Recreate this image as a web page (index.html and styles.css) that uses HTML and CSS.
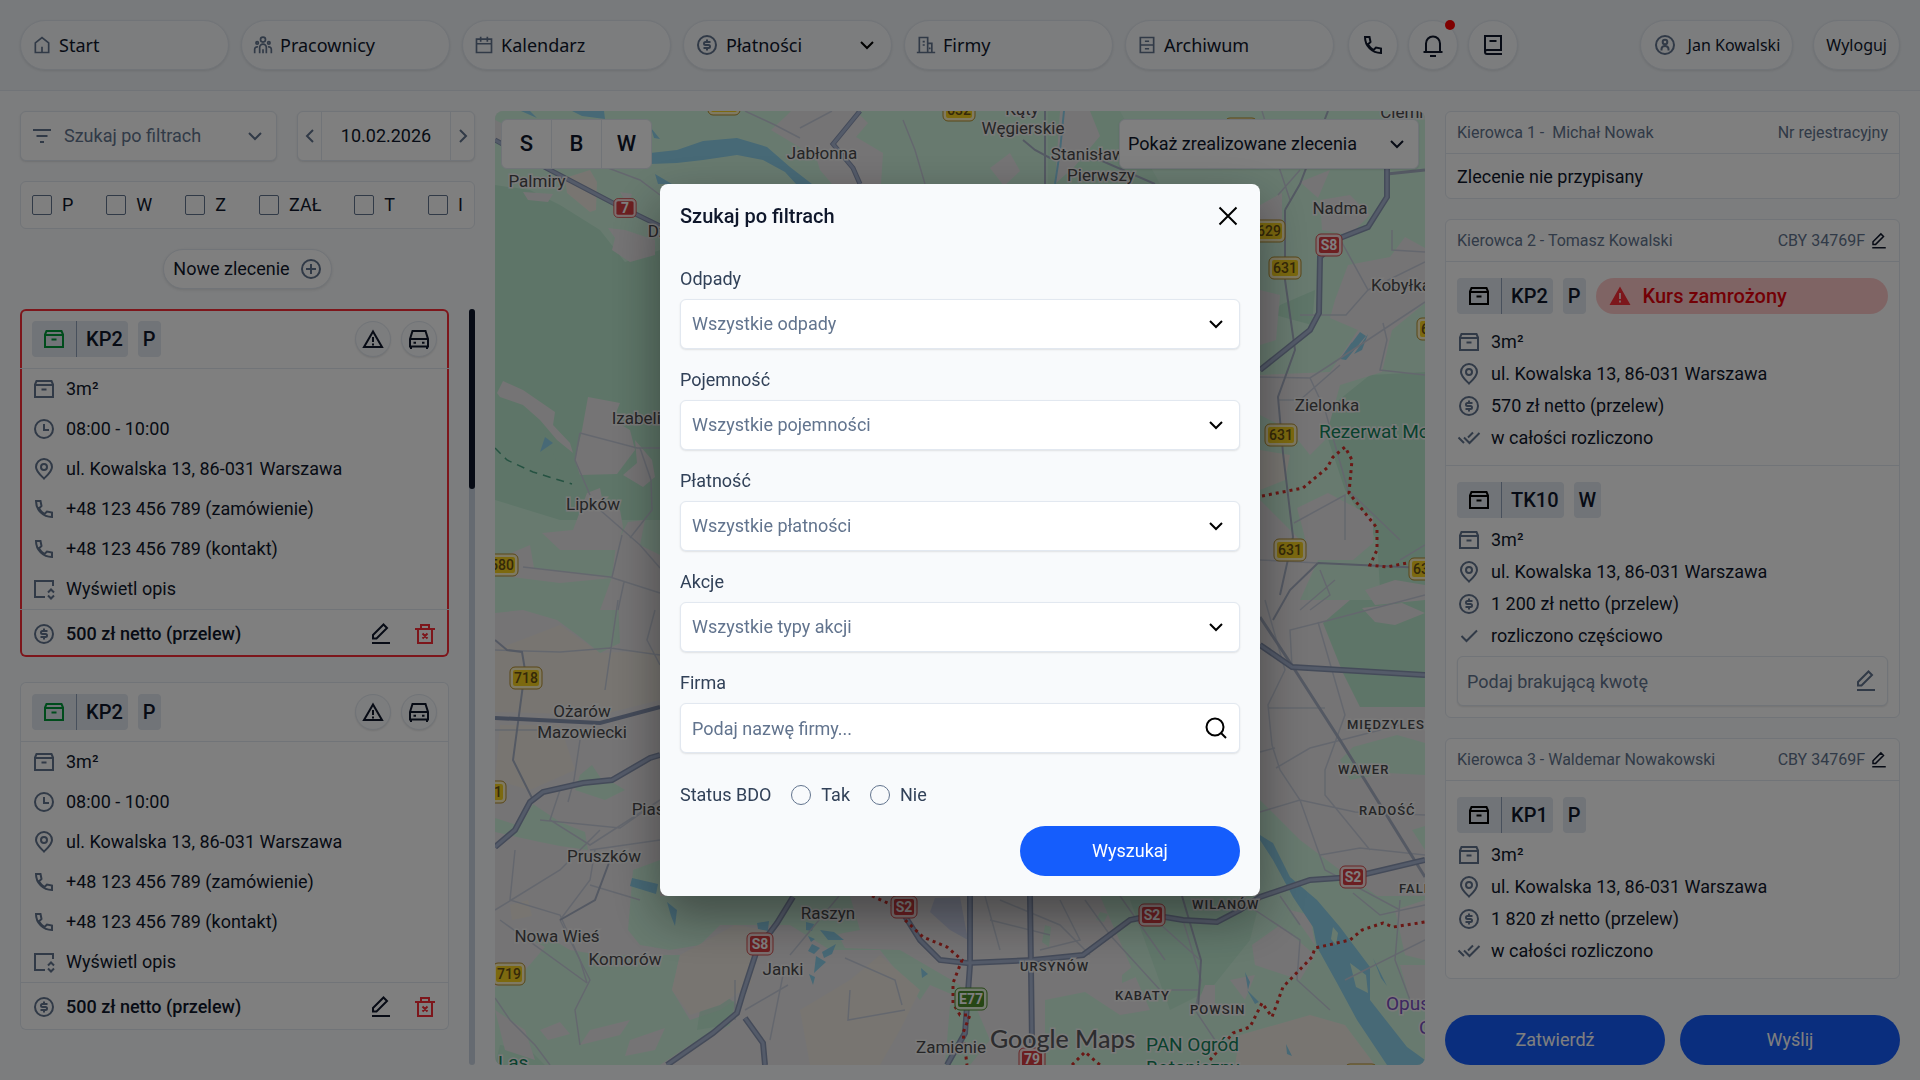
FILE: index.html
```html
<!doctype html>
<html lang="pl">
<head>
    <meta charset="UTF-8">
    <meta name="viewport" content="width=device-width, initial-scale=1.0">
    <title>Zlecenia</title>
    <link rel="stylesheet" href="styles.css">
</head>
<body>
    <!-- icons -->
    <svg class="sprite" aria-hidden="true">
        <symbol id="home" viewBox="0 0 24 24"><path d="M4 21V9.500L12 3l8 6.500V21zM12 21v-7"/></symbol>
        <symbol id="people" viewBox="0 0 24 24"><circle cx="12" cy="5.500" r="3"/><circle cx="5" cy="9.500" r="1.500"/><circle cx="19" cy="9.500" r="1.500"/><path d="M8 22v-7a4 4 0 0 1 8 0v7M12 17v5M2 22v-5a3 3 0 0 1 4-2.500M22 22v-5a3 3 0 0 0-4-2.500"/></symbol>
        <symbol id="calendar" viewBox="0 0 24 24"><path d="M3 5h18v16H3zM3 10.500h18M8 2v6M16 2v6"/></symbol>
        <symbol id="dollar" viewBox="0 0 24 24"><circle cx="12" cy="12" r="9"/><path d="M15.500 9h-5a1.500 1.500 0 0 0 0 3h3a1.500 1.500 0 0 1 0 3h-5M12 6.500V9M12 15v2.500"/></symbol>
        <symbol id="building" viewBox="0 0 24 24"><path d="M1 21h22M4 21V3h10v18M14 10h5v11M8 8h2.500M8 12h2.500M16.500 15v2"/></symbol>
        <symbol id="cabinet" viewBox="0 0 24 24"><path d="M4 3h16v18H4zM4 12h16M9.500 7.500h5M9.500 16.500h5"/></symbol>
        <symbol id="phone" viewBox="0 0 24 24"><path d="M4 4h4.500l1 5L7 11.500c1.500 2.500 3 4 5.500 5.500l2.500-2.500 5 1V20C11 20 4 13 4 4z"/></symbol>
        <symbol id="bell" viewBox="0 0 24 24"><path d="M2.500 19h19M5 19v-8.500a7 7 0 0 1 14 0V19M9 23h6"/></symbol>
        <symbol id="book" viewBox="0 0 24 24"><path d="M21 21H6a2 2 0 0 1-2-2V3h16v14H6a2 2 0 0 0-2 2M8.500 8h7"/></symbol>
        <symbol id="user" viewBox="0 0 24 24"><circle cx="12" cy="12" r="9"/><circle cx="12" cy="9" r="2.300"/><path d="M8.500 17.500v-1.500a3.500 3 0 0 1 7 0v1.500"/></symbol>
        <symbol id="filter" viewBox="0 0 24 24"><path d="M3 6h18M6.500 12h11M10 18h4"/></symbol>
        <symbol id="down" viewBox="0 0 24 24"><path d="M6 9l6 6 6-6"/></symbol>
        <symbol id="left" viewBox="0 0 24 24"><path d="M15 6l-6 6 6 6"/></symbol>
        <symbol id="right" viewBox="0 0 24 24"><path d="M9 6l6 6-6 6"/></symbol>
        <symbol id="plus" viewBox="0 0 24 24"><circle cx="12" cy="12" r="9"/><path d="M12 7v10M7 12h10"/></symbol>
        <symbol id="box" viewBox="0 0 24 24"><path d="M3 7.500V20h18V7.500L19.500 4h-15zM3 8h18M9.500 12.500h5"/></symbol>
        <symbol id="clock" viewBox="0 0 24 24"><circle cx="12" cy="12" r="9"/><path d="M12 7v6h5"/></symbol>
        <symbol id="pin" viewBox="0 0 24 24"><path d="M12 21.500c-3-3-8-7-8-11.500a8 8 0 0 1 16 0c0 4.500-5 8.500-8 11.500z"/><circle cx="12" cy="10" r="3"/></symbol>
        <symbol id="note" viewBox="0 0 24 24"><path d="M21 9V4H3v16h10M16 15.500l3-3 3 3M16 18.500l3 3 3-3"/></symbol>
        <symbol id="edit" viewBox="0 0 24 24"><path d="M3 21h18M4 16.500V13L14.500 2.500 18 6 7.500 16.500z"/></symbol>
        <symbol id="trash" viewBox="0 0 24 24"><path d="M2 7h20M8 6.500V3h8v3.500M5 7v14h14V7M9.500 11.500l5 5M14.500 11.500l-5 5"/></symbol>
        <symbol id="warn" viewBox="0 0 24 24"><path d="M12 4.500L3 20h18zM12 10v5M12 16.500v2"/></symbol>
        <symbol id="warn-full" viewBox="0 0 24 24"><path fill="currentColor" stroke="none" fill-rule="evenodd" d="M12 2.500L1.500 21h21zM11 9h2v6h-2zM11 16.500h2v2h-2z"/></symbol>
        <symbol id="car" viewBox="0 0 24 24"><path d="M3 12l2.500-8h13L21 12v7.500H3zM3 12h18M4 19v3M20 19v3M6.500 15.700h2.500M15 15.700h2.500"/></symbol>
        <symbol id="check" viewBox="0 0 24 24"><path d="M4.500 12l5 5L20 6.500"/></symbol>
        <symbol id="checks" viewBox="0 0 24 24"><path d="M1.500 11.500l5.500 5.500M7 11.500l5.500 5.500L22.500 7M11 11.500L16 6.500"/></symbol>
        <symbol id="close" viewBox="0 0 24 24"><path d="M3.500 3.500l17 17M20.500 3.500l-17 17"/></symbol>
        <symbol id="search" viewBox="0 0 24 24"><circle cx="11" cy="11" r="8.500"/><path d="M17 17l5 5"/></symbol>
        <symbol id="s-yellow" viewBox="0 0 34 24"><rect x="1" y="1" width="32" height="22" rx="5" fill="#fff4c4" stroke="#b58f2c"/><rect x="4" y="4" width="26" height="16" rx="2" fill="#f9d31f" stroke="none"/></symbol>
        <symbol id="s-red" viewBox="0 0 28 24"><rect x="1" y="1" width="26" height="22" rx="5" fill="#f9dede" stroke="#d34b4b"/><rect x="4" y="4" width="20" height="16" rx="2" fill="#d93f43" stroke="none"/></symbol>
        <symbol id="s-green" viewBox="0 0 34 24"><rect x="1" y="1" width="32" height="22" rx="5" fill="#e7f5de" stroke="#4c8c2b"/><rect x="4" y="4" width="26" height="16" rx="2" fill="#4c8c2b" stroke="none"/></symbol>
    </svg>

    <header class="topbar">
        <nav class="nav">
            <a class="pill" href="#"><svg class="icon icon-s"><use href="#home"/></svg>Start</a>
            <a class="pill" href="#"><svg class="icon icon-s"><use href="#people"/></svg>Pracownicy</a>
            <a class="pill" href="#"><svg class="icon icon-s"><use href="#calendar"/></svg>Kalendarz</a>
            <button class="pill" type="button"><svg class="icon"><use href="#dollar"/></svg>Płatności<svg class="icon pill-arrow"><use href="#down"/></svg></button>
            <a class="pill" href="#"><svg class="icon icon-s"><use href="#building"/></svg>Firmy</a>
            <a class="pill" href="#"><svg class="icon icon-s"><use href="#cabinet"/></svg>Archiwum</a>
        </nav>
        <div class="tools">
            <button class="round" type="button" aria-label="Telefon"><svg class="icon"><use href="#phone"/></svg></button>
            <button class="round" type="button" aria-label="Powiadomienia"><svg class="icon"><use href="#bell"/></svg><span class="dot"></span></button>
            <button class="round" type="button" aria-label="Notatnik"><svg class="icon"><use href="#book"/></svg></button>
        </div>
        <div class="account">
            <a class="pill pill-small" href="#"><svg class="icon"><use href="#user"/></svg>Jan Kowalski</a>
            <button class="pill pill-small" type="button">Wyloguj</button>
        </div>
    </header>

    <main class="main">
        <!-- orders -->
        <aside class="orders">
            <div class="orders-top">
                <button class="filter" type="button"><svg class="icon"><use href="#filter"/></svg>Szukaj po filtrach<svg class="icon filter-arrow"><use href="#down"/></svg></button>
                <div class="date">
                    <button type="button" aria-label="Poprzedni dzień"><svg class="icon"><use href="#left"/></svg></button>
                    <span>10.02.2026</span>
                    <button type="button" aria-label="Następny dzień"><svg class="icon"><use href="#right"/></svg></button>
                </div>
            </div>
            <div class="checks">
                <label><input type="checkbox">P</label>
                <label><input type="checkbox">W</label>
                <label><input type="checkbox">Z</label>
                <label><input type="checkbox">ZAŁ</label>
                <label><input type="checkbox">T</label>
                <label><input type="checkbox">I</label>
            </div>
            <button class="new-order" type="button">Nowe zlecenie<svg class="icon"><use href="#plus"/></svg></button>

            <div class="list-wrap">
                <div class="list">
                    <article class="order order-active">
                        <div class="order-head">
                            <span class="tag tag-green"><span class="tag-icon"><svg class="icon"><use href="#box"/></svg></span><b>KP2</b></span>
                            <span class="tag"><b>P</b></span>
                            <button class="mini first" type="button" aria-label="Ostrzeżenie"><svg class="icon"><use href="#warn"/></svg></button>
                            <button class="mini" type="button" aria-label="Pojazd"><svg class="icon"><use href="#car"/></svg></button>
                        </div>
                        <ul class="rows">
                            <li><svg class="icon"><use href="#box"/></svg>3m²</li>
                            <li><svg class="icon"><use href="#clock"/></svg>08:00 - 10:00</li>
                            <li><svg class="icon"><use href="#pin"/></svg>ul. Kowalska 13, 86-031 Warszawa</li>
                            <li><svg class="icon"><use href="#phone"/></svg>+48 123 456 789 (zamówienie)</li>
                            <li><svg class="icon"><use href="#phone"/></svg>+48 123 456 789 (kontakt)</li>
                            <li><svg class="icon"><use href="#note"/></svg>Wyświetl opis</li>
                        </ul>
                        <div class="order-foot">
                            <svg class="icon"><use href="#dollar"/></svg>500 zł netto (przelew)
                            <button class="plain first" type="button" aria-label="Edytuj"><svg class="icon"><use href="#edit"/></svg></button>
                            <button class="plain red" type="button" aria-label="Usuń"><svg class="icon"><use href="#trash"/></svg></button>
                        </div>
                    </article>
                    <article class="order">
                        <div class="order-head">
                            <span class="tag tag-green"><span class="tag-icon"><svg class="icon"><use href="#box"/></svg></span><b>KP2</b></span>
                            <span class="tag"><b>P</b></span>
                            <button class="mini first" type="button" aria-label="Ostrzeżenie"><svg class="icon"><use href="#warn"/></svg></button>
                            <button class="mini" type="button" aria-label="Pojazd"><svg class="icon"><use href="#car"/></svg></button>
                        </div>
                        <ul class="rows">
                            <li><svg class="icon"><use href="#box"/></svg>3m²</li>
                            <li><svg class="icon"><use href="#clock"/></svg>08:00 - 10:00</li>
                            <li><svg class="icon"><use href="#pin"/></svg>ul. Kowalska 13, 86-031 Warszawa</li>
                            <li><svg class="icon"><use href="#phone"/></svg>+48 123 456 789 (zamówienie)</li>
                            <li><svg class="icon"><use href="#phone"/></svg>+48 123 456 789 (kontakt)</li>
                            <li><svg class="icon"><use href="#note"/></svg>Wyświetl opis</li>
                        </ul>
                        <div class="order-foot">
                            <svg class="icon"><use href="#dollar"/></svg>500 zł netto (przelew)
                            <button class="plain first" type="button" aria-label="Edytuj"><svg class="icon"><use href="#edit"/></svg></button>
                            <button class="plain red" type="button" aria-label="Usuń"><svg class="icon"><use href="#trash"/></svg></button>
                        </div>
                    </article>
                </div>
                <div class="scroll"><div class="thumb"></div></div>
            </div>
        </aside>

        <!-- map -->
        <section class="map">
            <svg class="map-svg" viewBox="495 111 930 954" preserveAspectRatio="xMidYMid slice">
                <rect x="495" y="111" width="930" height="954" fill="#ebe8ea"/>
                <!-- green -->
                <g fill="#d0f5df">
                    <path d="M495 111H1425V600H495z"/>
                    <path d="M495 600H618L620 643 600 653 580 637 557 620 523 610 495 613z"/>
                    <path d="M495 818L520 826 533 804 560 822 585 832 588 850 560 846 540 842 495 832z"/>
                    <path d="M580 775L592 765 602 780 612 782 625 790 605 800 575 790z"/>
                    <path d="M633 870L660 860 660 896H850L860 930 838 934 845 948 900 950 960 985 965 1000 930 985 920 1000 880 950 830 950 790 925 765 925 740 925 720 925 700 945 670 950 640 945 628 930z"/>
                    <path d="M495 970L520 950 545 935 570 950 600 955 680 955 672 990 690 1020 720 1010 735 1000 730 1025 690 1045 660 1065H495z"/>
                    <path d="M1100 896H1425V1065H1045V1000L1085 992 1120 1015 1150 1010z"/>
                    <path d="M1260 800L1300 840 1340 870 1390 905 1340 920 1290 905 1260 900z"/>
                    <path d="M1340 760L1353 747 1397 735 1425 743V775L1387 773 1350 780z"/>
                    <path d="M1412 830L1425 826V850z"/>
                    <path d="M950 1005H975L990 1040 970 1065H945z"/>
                    <path d="M1045 925l6 2-2 20-7-5zM1122 975l10-8 4 10-14 6zM1100 912l8 2-4 8-8-2z"/>
                </g>
                <g fill="#bcebd0">
                    <path d="M495 185L530 190 560 205 600 230 625 262 660 250V520H560L495 500z"/>
                    <path d="M540 420L575 400 590 390 625 400 660 420V500H600L560 470z" opacity=".6"/>
                    <path d="M1130 900H1260L1250 940 1210 990 1170 1010z" opacity=".7"/>
                    <path d="M1048 111L1120 111 1160 184H1048z" opacity=".5"/>
                    <path d="M1320 415L1370 375 1425 372V610L1380 590 1377 540 1345 490z"/>
                    <path d="M1323 623L1350 600H1425V707H1360L1343 673z"/>
                    <path d="M1280 305L1315 290 1312 325 1275 315z"/>
                    <path d="M700 1010l25-15 12 10-10 20-30 5zM500 1045l30 5 15 15H495z" opacity=".7"/>
                </g>
                <!-- built-up land -->
                <g fill="#ebe8ea">
                    <path d="M791 111H856L868 123 856 137 883 153 881 184H832L820 170 816 157 771 130 785 117z"/>
                    <path d="M990 168l20-15 10 18-16 15zM1060 111h30l10 25-25 30-20 18z"/>
                    <path d="M497 393L503 381 523 390 555 412 553 425 570 443 573 453 557 440 540 420 523 405 500 397z"/>
                    <path d="M588 397L620 403 613 420 630 430 635 450 617 474 580 475 575 460 582 430z"/>
                    <path d="M623 475L637 463 635 440 652 460 655 477 643 487z"/>
                    <path d="M542 533L573 530 587 493 600 488 603 503 620 510 623 527 617 550H560z"/>
                    <path d="M628 522L645 520 640 545 660 555V610H600L612 577 616 545z"/>
                    <path d="M495 560L530 545 534 568 612 578 560 583 495 575z"/>
                    <path d="M608 228L625 230 655 240V255L630 262 612 250 615 238z"/>
                    <path d="M523 192l30 2-5 8-20-2zM620 192l12 2-4 12zM495 120l25 12-5 18-20-10z"/>
                    <path d="M1348 265L1390 257 1405 237 1425 248V303L1392 330 1382 372 1340 385 1325 440 1310 455 1290 430 1260 415V375L1330 372 1358 330 1330 318 1335 300z"/>
                    <path d="M1297 508L1328 493 1373 517V543L1353 560H1310L1303 530z"/>
                    <path d="M1300 182l30-12-12 28zM1260 205l22-12v30l-22 8zM1260 290l20 5-4 45-16 5zM1320 200l30-5 20 20-20 20-28-5z"/>
                    <path d="M1260 500L1300 540 1318 560 1300 600H1260z"/>
                    <path d="M1365 590l30-10 30 5v15l-50 5zM1362 608l40-5 23 10-30 12-20-3z"/>
                    <path d="M1252 945l28-20 35 30-15 25-45-15zM1290 910l20 5 5 30zM1205 985l10 0 0 25-20 0zM1230 980l25-5-10 25zM1395 910l30-10v60l-20-5zM1400 965h25v45l-15-10z"/>
                    <path d="M495 955l30-18 20 10-30 35-20 5zM540 1030l20-8 10 12-22 6zM590 1030l40-10-10 15-40 10zM630 1040l35-12-10 22-30 6zM495 1010l30 20 10 30-30-10z"/>
                </g>
                <!-- beige -->
                <g fill="#f0ebe3">
                    <path d="M565 178L590 170 597 182 596 210 590 212 567 193z"/>
                    <path d="M495 650L560 625 600 653 660 650V700L600 715 495 712zM500 725L560 725 575 770 530 790 495 780z"/>
                    <path d="M680 955L735 925 765 930 750 985 720 1005 690 1015 672 990z"/>
                    <path d="M850 980L880 955 920 990 900 1030 880 1065H810L800 1010z"/>
                    <path d="M1240 1035L1310 1015 1345 1025 1375 1065H1235z"/>
                    <path d="M1260 450L1290 455 1285 480 1260 490zM510 905l18-5 4 16-20 4z"/>
                </g>
                <path d="M935 898L960 897 968 940 950 930 930 912z" fill="#cdd3ea"/>
                <!-- water -->
                <g fill="#8fd2ec">
                    <path d="M650 153L677 150 703 141 737 138 767 147 790 167 812 184H796L785 172 763 160 737 155 703 160 677 163 650 164z"/>
                    <path d="M572 111H604L605 119 582 116zM521 111H530L537 118zM651 128L660 139 654 138zM655 174L672 184H658z"/>
                    <path d="M545 437L553 443 540 452z"/>
                    <path d="M1260 835L1273 843 1290 877 1317 900 1340 927 1370 967V1000L1407 1047 1425 1060V1065H1387L1357 1020 1337 983 1317 947 1313 927 1293 897 1273 860 1260 840z"/>
                    <path d="M1360 332l6 4-20 24-4-4zM1368 334l-6 16-8 4zM1352 342l-6 18-6-1z"/>
                    <path d="M632 878l26 6-2 10-26-8zM667 902l10 8-2 16-4-10zM757 923l12-2-1 10-10-2z"/>
                    <path d="M806 922l8 2-2 7-6-1zM820 930l14 2 10 8-16 0zM812 944l8 4-6 6-6-3zM822 952l14-8-4 10-8 4zM816 956l10 6-12 11zM809 974l6 3-2 8zM808 936l7 3-4 3z"/>
                    <path d="M1245 972l5 10-2 8zM1247 990l12 12-4 2zM1373 958l14 28-6-8zM1286 1044l6 12-5-2zM921 968l7 6-6 4z"/>
                </g>
                <path d="M1333 927l5 6-2 12-5-6zM1350 963l16 12 2 18-12-6z" fill="#d0f5df"/>
                <path d="M1064 111l-4 40-5 33" fill="none" stroke="#8fd2ec" stroke-width="2"/>
                <!-- small roads -->
                <g fill="none" stroke="#c9cfdc" stroke-width="1.500">
                    <path d="M745 111L775 125 800 138M832 111L800 128M903 120L915 150 925 184M600 165L640 180 660 195"/>
                    <path d="M580 433L637 448 660 448M580 433L575 460 590 495M600 510L640 545 660 568M640 448L651 480 652 510 630 538M523 567L610 577 660 593M622 535L612 577M624 582L618 610"/>
                    <path d="M618 600L605 690M495 650L560 652 610 648 660 655M655 610L647 640 660 665M580 740L574 780 568 802M495 730L560 730 625 735M560 790L550 820 590 845 660 800M540 820L620 828 660 800M595 850L590 880 560 920M590 850L660 840M590 885L640 900M495 910L560 870 600 830M515 850L510 900 560 915 580 960 587 983"/>
                    <path d="M560 920L590 980 575 1010 580 1045M587 983L500 920M495 998L510 1020 535 1045 550 1065M839 896L790 955M788 985L745 1010M784 970L770 1040M845 958L895 980 902 1005M735 980V1020M850 990L848 1020 905 1010"/>
                    <path d="M985 896L1000 950M1000 900L1060 925 1090 955M1060 900L1080 940 1040 950M1085 900L1110 935 1160 990M1120 896L1165 960M990 920L1050 935M1150 915L1200 960M1183 920L1192 950 1201 980 1195 1010 1215 1040M1170 990L1200 990M1240 900L1300 940 1297 980 1330 1010M1280 896L1300 925M1400 900L1395 960 1410 1000 1425 1010M1345 980L1425 940"/>
                    <path d="M1262 111L1280 170 1290 200M1300 170L1278 195M1340 239L1368 290 1346 315 1300 315M1368 290L1425 262M1392 230L1392 250 1425 252M1260 377L1310 378 1330 365 1425 302M1383 323L1387 340 1380 370 1425 375M1310 378L1325 410 1348 490 1400 540M1340 365L1300 400 1278 400M1294 523L1345 495 1345 540M1320 570L1330 595 1310 610M1335 580L1300 610M1260 560L1318 563M1425 545L1400 560"/>
                    <path d="M1265 600L1285 670 1268 705 1272 745 1280 770 1300 800 1325 870 1400 910M1292 667L1290 630 1330 620 1425 595M1318 622L1345 715 1325 770V795L1370 850M1268 708H1325M1276 768L1310 748 1400 725M1260 812L1300 800 1355 812 1425 815M1320 855L1360 848 1425 855M1260 752L1275 748M1353 893L1380 915 1425 905"/>
                </g>
                <g fill="none" stroke="#a9b2c6" stroke-width="2">
                    <path d="M1023 140L1035 150 1050 158 1100 160 1155 184M1045 111V184M1328 111L1300 184 1285 210M495 640L507 650 522 652 525 670 513 760 533 800M610 860L595 900 560 920M1030 625L1045 600M1182 896L1201 960 1198 1010"/>
                    <path d="M1285 210V280L1295 350 1278 397 1283 453 1293 537 1280 595M1318 563L1425 568M1318 563L1290 590 1273 620"/>
                    <path d="M1387 174L1425 170M1260 617L1293 667 1340 740 1425 877" stroke-width="3"/>
                </g>
                <!-- main roads -->
                <g fill="none" stroke="#8996b3" stroke-width="6">
                    <path d="M495 140L550 170 613 203 660 226M860 111L833 144 853 168 860 184" stroke-width="5"/>
                    <path d="M495 718L600 723 660 707" stroke-width="4"/>
                    <path d="M495 847L515 830 530 802 543 792 583 783 612 780 650 758 660 755"/>
                    <path d="M793 897L777 923 757 950 743 993 737 1013 713 1033 667 1065M745 1018L763 1043 765 1065"/>
                    <path d="M903 913L920 940 940 960 967 963 1033 960 1083 955 1130 920 1153 915 1183 920 1217 922 1240 910 1260 897 1310 880 1353 877 1425 860"/>
                    <path d="M970 896V965L965 1033 947 1065M1030 896L1032 1043M1260 645L1292 667 1425 675"/>
                    <path d="M1387 160V197L1368 227 1340 238 1320 257 1319 313 1310 330 1260 370"/>
                </g>
                <g fill="none" stroke="#a9b6d3" stroke-width="3">
                    <path d="M495 140L550 170 613 203 660 226M860 111L833 144 853 168 860 184"/>
                    <path d="M495 847L515 830 530 802 543 792 583 783 612 780 650 758 660 755"/>
                    <path d="M793 897L777 923 757 950 743 993 737 1013 713 1033 667 1065M745 1018L763 1043 765 1065"/>
                    <path d="M903 913L920 940 940 960 967 963 1033 960 1083 955 1130 920 1153 915 1183 920 1217 922 1240 910 1260 897 1310 880 1353 877 1425 860"/>
                    <path d="M970 896V965L965 1033 947 1065M1030 896L1032 1043M1260 645L1292 667 1425 675"/>
                    <path d="M1387 160V197L1368 227 1340 238 1320 257 1319 313 1310 330 1260 370"/>
                </g>
                <path d="M495 448L507 460 533 472 572 484" fill="none" stroke="#4ca585" stroke-width="1.500" stroke-dasharray="8 6"/>
                <!-- city limits -->
                <g fill="none" stroke="#d5302a" stroke-width="3" stroke-dasharray="3 4">
                    <path d="M872 896L892 905 905 920 923 937 947 947 962 960 953 983V1003L960 1015H970L963 1033 967 1065"/>
                    <path d="M1072 1065L1085 1052 1100 1065M1210 1060L1233 1033 1250 1027 1262 1003 1272 1017 1283 987 1312 957 1315 948 1350 940 1362 930 1383 923 1393 927 1425 922"/>
                    <path d="M1262 496L1303 488 1327 468 1333 457 1345 447 1352 460 1349 493 1377 528V550L1370 565 1387 567 1407 563"/>
                </g>
                <!-- road numbers -->
                <g class="signs">
                    <use href="#s-red" x="613" y="196" width="24" height="24"/><text class="w" x="625" y="213">7</text>
                    <use href="#s-red" x="1315" y="233" width="28" height="24"/><text class="w" x="1329" y="250">S8</text>
                    <use href="#s-red" x="890" y="895" width="28" height="24"/><text class="w" x="904" y="912">S2</text>
                    <use href="#s-red" x="746" y="932" width="28" height="24"/><text class="w" x="760" y="949">S8</text>
                    <use href="#s-red" x="1138" y="903" width="28" height="24"/><text class="w" x="1152" y="920">S2</text>
                    <use href="#s-red" x="1339" y="865" width="28" height="24"/><text class="w" x="1353" y="882">S2</text>
                    <use href="#s-red" x="1018" y="1047" width="28" height="24"/><text class="w" x="1032" y="1064">79</text>
                    <use href="#s-green" x="954" y="987" width="34" height="24"/><text class="w" x="971" y="1004">E77</text>
                    <use href="#s-yellow" x="1252" y="219" width="34" height="24"/><text x="1269" y="236">629</text>
                    <use href="#s-yellow" x="1268" y="256" width="34" height="24"/><text x="1285" y="273">631</text>
                    <use href="#s-yellow" x="1264" y="423" width="34" height="24"/><text x="1281" y="440">631</text>
                    <use href="#s-yellow" x="1273" y="538" width="34" height="24"/><text x="1290" y="555">631</text>
                    <use href="#s-yellow" x="1408" y="557" width="34" height="24"/><text x="1425" y="574">631</text>
                    <use href="#s-yellow" x="1416" y="317" width="34" height="24"/><text x="1433" y="334">634</text>
                    <use href="#s-yellow" x="942" y="98" width="34" height="24"/><text x="959" y="115">632</text>
                    <use href="#s-yellow" x="707" y="92" width="34" height="24"/>
                    <use href="#s-yellow" x="1224" y="117" width="34" height="24"/>
                    <use href="#s-yellow" x="1344" y="1063" width="34" height="24"/>
                    <use href="#s-yellow" x="485" y="553" width="34" height="24"/><text x="502" y="570">580</text>
                    <use href="#s-yellow" x="509" y="666" width="34" height="24"/><text x="526" y="683">718</text>
                    <use href="#s-yellow" x="473" y="780" width="34" height="24"/><text x="490" y="797">701</text>
                    <use href="#s-yellow" x="492" y="962" width="34" height="24"/><text x="509" y="979">719</text>
                </g>
                <!-- places -->
                <g class="places">
                    <text x="537" y="187">Palmiry</text>
                    <text x="822" y="159">Jabłonna</text>
                    <text x="1022" y="115">Kąty</text>
                    <text x="1023" y="134">Węgierskie</text>
                    <text x="1099" y="160">Stanisławów</text>
                    <text x="1101" y="181">Pierwszy</text>
                    <text x="1409" y="118">Ciemne</text>
                    <text x="1340" y="214">Nadma</text>
                    <text x="1401" y="291">Kobyłka</text>
                    <text x="1327" y="411">Zielonka</text>
                    <text x="689" y="237">Dziekanów</text>
                    <text x="641" y="424">Izabelin</text>
                    <text x="593" y="510">Lipków</text>
                    <text x="582" y="717">Ożarów</text>
                    <text x="582" y="738">Mazowiecki</text>
                    <text x="662" y="815">Piastów</text>
                    <text x="604" y="862">Pruszków</text>
                    <text x="557" y="942">Nowa Wieś</text>
                    <text x="625" y="965">Komorów</text>
                    <text x="783" y="975">Janki</text>
                    <text x="828" y="919">Raszyn</text>
                    <text x="951" y="1053">Zamienie</text>
                </g>
                <g class="districts">
                    <text x="1347" y="729">MIĘDZYLESIE</text>
                    <text x="1338" y="774">WAWER</text>
                    <text x="1359" y="815">RADOŚĆ</text>
                    <text x="1399" y="893">FALENICA</text>
                    <text x="1192" y="909">WILANÓW</text>
                    <text x="1020" y="971">URSYNÓW</text>
                    <text x="1115" y="1000">KABATY</text>
                    <text x="1190" y="1014">POWSIN</text>
                </g>
                <g class="parks">
                    <text x="1319" y="438">Rezerwat Modrzewiowy</text>
                    <text x="1146" y="1051">PAN Ogród</text>
                    <text x="1146" y="1074">Botaniczny</text>
                    <text x="498" y="1069">Las</text>
                    <text class="violet" x="1386" y="1010">Opuszczony</text>
                    <text class="violet" x="1419" y="1034">Ośrodek</text>
                </g>
                <text class="logo" x="990" y="1048">Google Maps</text>
            </svg>
            <div class="map-tools">
                <div class="views">
                    <button type="button">S</button>
                    <button type="button">B</button>
                    <button type="button">W</button>
                </div>
                <div class="select done">
                    <select aria-label="Zlecenia na mapie"><option>Pokaż zrealizowane zlecenia</option></select>
                    <svg class="icon"><use href="#down"/></svg>
                </div>
            </div>
        </section>

        <!-- drivers -->
        <aside class="drivers">
            <article class="driver">
                <div class="driver-head"><span>Kierowca 1 - &nbsp;Michał Nowak</span><span>Nr rejestracyjny</span></div>
                <p class="empty">Zlecenie nie przypisany</p>
            </article>
            <article class="driver">
                <div class="driver-head"><span>Kierowca 2 - Tomasz Kowalski</span><span class="plate">CBY 34769F<button class="plain" type="button" aria-label="Edytuj"><svg class="icon icon-xs"><use href="#edit"/></svg></button></span></div>
                <div class="course course-frozen">
                    <div class="tags">
                        <span class="tag"><span class="tag-icon"><svg class="icon"><use href="#box"/></svg></span><b>KP2</b></span>
                        <span class="tag"><b>P</b></span>
                        <span class="frozen"><svg class="icon"><use href="#warn-full"/></svg>Kurs zamrożony</span>
                    </div>
                    <ul class="rows rows-small">
                        <li><svg class="icon"><use href="#box"/></svg>3m²</li>
                        <li><svg class="icon"><use href="#pin"/></svg>ul. Kowalska 13, 86-031 Warszawa</li>
                        <li><svg class="icon"><use href="#dollar"/></svg>570 zł netto (przelew)</li>
                        <li><svg class="icon"><use href="#checks"/></svg>w całości rozliczono</li>
                    </ul>
                </div>
                <div class="course">
                    <div class="tags">
                        <span class="tag"><span class="tag-icon"><svg class="icon"><use href="#box"/></svg></span><b>TK10</b></span>
                        <span class="tag"><b>W</b></span>
                    </div>
                    <ul class="rows rows-small">
                        <li><svg class="icon"><use href="#box"/></svg>3m²</li>
                        <li><svg class="icon"><use href="#pin"/></svg>ul. Kowalska 13, 86-031 Warszawa</li>
                        <li><svg class="icon"><use href="#dollar"/></svg>1 200 zł netto (przelew)</li>
                        <li><svg class="icon"><use href="#check"/></svg>rozliczono częściowo</li>
                    </ul>
                    <div class="select amount">
                        <input type="text" placeholder="Podaj brakującą kwotę" aria-label="Brakująca kwota">
                        <svg class="icon"><use href="#edit"/></svg>
                    </div>
                </div>
            </article>
            <article class="driver">
                <div class="driver-head"><span>Kierowca 3 - Waldemar Nowakowski</span><span class="plate">CBY 34769F<button class="plain" type="button" aria-label="Edytuj"><svg class="icon icon-xs"><use href="#edit"/></svg></button></span></div>
                <div class="course">
                    <div class="tags">
                        <span class="tag"><span class="tag-icon"><svg class="icon"><use href="#box"/></svg></span><b>KP1</b></span>
                        <span class="tag"><b>P</b></span>
                    </div>
                    <ul class="rows rows-small">
                        <li><svg class="icon"><use href="#box"/></svg>3m²</li>
                        <li><svg class="icon"><use href="#pin"/></svg>ul. Kowalska 13, 86-031 Warszawa</li>
                        <li><svg class="icon"><use href="#dollar"/></svg>1 820 zł netto (przelew)</li>
                        <li><svg class="icon"><use href="#checks"/></svg>w całości rozliczono</li>
                    </ul>
                </div>
            </article>
            <div class="driver-buttons">
                <button class="primary" type="button">Zatwierdź</button>
                <button class="primary" type="button">Wyślij</button>
            </div>
        </aside>
    </main>

    <!-- filter window -->
    <div class="overlay">
        <form class="modal" role="dialog" aria-labelledby="modal-title">
            <div class="modal-head">
                <h2 id="modal-title">Szukaj po filtrach</h2>
                <button class="plain" type="button" aria-label="Zamknij"><svg class="icon"><use href="#close"/></svg></button>
            </div>
            <div class="field">
                <label for="waste">Odpady</label>
                <div class="select"><select id="waste"><option>Wszystkie odpady</option></select><svg class="icon"><use href="#down"/></svg></div>
            </div>
            <div class="field">
                <label for="size">Pojemność</label>
                <div class="select"><select id="size"><option>Wszystkie pojemności</option></select><svg class="icon"><use href="#down"/></svg></div>
            </div>
            <div class="field">
                <label for="payment">Płatność</label>
                <div class="select"><select id="payment"><option>Wszystkie płatności</option></select><svg class="icon"><use href="#down"/></svg></div>
            </div>
            <div class="field">
                <label for="action">Akcje</label>
                <div class="select"><select id="action"><option>Wszystkie typy akcji</option></select><svg class="icon"><use href="#down"/></svg></div>
            </div>
            <div class="field">
                <label for="company">Firma</label>
                <div class="select"><input id="company" type="text" placeholder="Podaj nazwę firmy..."><svg class="icon"><use href="#search"/></svg></div>
            </div>
            <div class="bdo">
                <span>Status BDO</span>
                <label><input type="radio" name="bdo">Tak</label>
                <label><input type="radio" name="bdo">Nie</label>
            </div>
            <button class="primary submit" type="submit">Wyszukaj</button>
        </form>
    </div>
</body>
</html>
```

FILE: styles.css
```css
*{
    box-sizing: border-box;
}
body,ul,p,h2{
    margin: 0;
}
ul{
    padding-left: 0;
    list-style: none;
}
body{
    min-height: 100vh;
    display: flex;
    flex-direction: column;
    background: #f8fafc;
    color: #0f172b;
    font: 18px/24px Roboto, sans-serif;
}
button,input,select{
    font: inherit;
    color: inherit;
    margin: 0;
}
button{
    padding: 0;
    border: 0;
    background: none;
    cursor: pointer;
}
a{
    color: inherit;
    text-decoration: none;
}
b{
    font-weight: 500;
}

/* icons */
.sprite{
    position: absolute;
    width: 0;
    height: 0;
}
.icon{
    width: 24px;
    height: 24px;
    flex: none;
    display: block;
    fill: none;
    stroke: currentColor;
    stroke-width: 2;
}
.icon-s{
    width: 20px;
    height: 20px;
}
.icon-xs{
    width: 18px;
    height: 18px;
}
.first{
    margin-left: auto;
}

/* top bar */
.topbar{
    display: flex;
    align-items: center;
    gap: 14px;
    padding: 20px;
    background: #f1f5f9;
    border-bottom: 1px solid #e2e8f0;
    font-family: "Noto Sans", sans-serif;
}
.nav{
    display: flex;
    gap: 12px;
}
.pill{
    display: flex;
    align-items: center;
    gap: 7px;
    width: 209px;
    height: 50px;
    padding: 0 12px 0 11px;
    border: 1px solid #e2e8f0;
    border-radius: 25px;
    background: #f8fafc;
    box-shadow: 0 1px 3px rgba(0,0,0,.1);
}
.pill .icon{
    color: #62748e;
}
.pill .pill-arrow{
    margin-left: auto;
    color: #000;
}
.pill-small{
    width: auto;
    gap: 11px;
    padding: 0 12px;
    font-size: 16px;
}
.tools{
    display: flex;
    gap: 10px;
}
.round{
    position: relative;
    display: flex;
    align-items: center;
    justify-content: center;
    width: 50px;
    height: 50px;
    border: 1px solid #e2e8f0;
    border-radius: 50%;
    background: #f8fafc;
    box-shadow: 0 1px 3px rgba(0,0,0,.1);
}
.dot{
    position: absolute;
    top: -1px;
    right: 2px;
    width: 10px;
    height: 10px;
    border-radius: 50%;
    background: #f00;
}
.account{
    display: flex;
    gap: 20px;
    margin-left: auto;
}

/* columns */
.main{
    flex: 1;
    display: grid;
    grid-template-columns: 455px 1fr 455px;
    gap: 20px;
    padding: 20px 20px 15px;
}

/* orders */
.orders{
    display: flex;
    flex-direction: column;
    gap: 20px;
}
.orders-top{
    display: flex;
    gap: 20px;
}
.filter{
    flex: 1;
    display: flex;
    align-items: center;
    gap: 10px;
    height: 50px;
    padding: 0 9px;
    border: 1px solid #e2e8f0;
    border-radius: 6px;
    background: #fff;
    box-shadow: 0 1px 2px rgba(0,0,0,.1);
    color: #62748e;
}
.filter-arrow{
    margin-left: auto;
}
.date{
    display: grid;
    grid-template-columns: 23px 130px 23px;
    height: 50px;
    border: 1px solid #e2e8f0;
    border-radius: 6px;
    background: #fff;
    box-shadow: 0 1px 2px rgba(0,0,0,.1);
    line-height: 48px;
    text-align: center;
}
.date span{
    border: solid #e2e8f0;
    border-width: 0 1px;
}
.date button{
    display: flex;
    align-items: center;
    justify-content: center;
    color: #62748e;
}
.checks{
    display: flex;
    justify-content: space-between;
    padding: 11px;
    border: 1px solid #e2e8f0;
    border-radius: 6px;
    background: #fff;
}
.checks label{
    display: flex;
    align-items: center;
    gap: 10px;
}
.checks input{
    appearance: none;
    width: 20px;
    height: 20px;
    border: 1px solid #62748e;
    border-radius: 2px;
}
.new-order{
    align-self: center;
    display: flex;
    align-items: center;
    gap: 9px;
    height: 40px;
    padding: 0 8px 0 9px;
    border: 1px solid #e2e8f0;
    border-radius: 20px;
    background: #fff;
    box-shadow: 0 1px 3px rgba(0,0,0,.1);
}
.new-order .icon{
    color: #62748e;
}
.list-wrap{
    flex: 1;
    display: flex;
    gap: 20px;
}
.list{
    flex: 1;
    display: flex;
    flex-direction: column;
    gap: 25px;
}
.scroll{
    width: 6px;
    border-radius: 3px;
    background: #cad5e2;
}
.thumb{
    height: 180px;
    border-radius: 3px;
    background: #0f172b;
}
.order{
    border-radius: 6px;
    background: #fff;
    box-shadow: inset 0 0 0 1px #e2e8f0;
}
.order-active{
    box-shadow: inset 0 0 0 2px #fb2c36;
}
.order-head{
    display: flex;
    gap: 10px;
    padding: 12px 12px 11px;
}
.order .rows{
    border: solid #e2e8f0;
    border-width: 1px 0;
}
.rows li{
    display: flex;
    align-items: center;
    gap: 10px;
    height: 40px;
    padding: 0 12px;
}
.rows .icon,.order-foot > .icon{
    color: #62748e;
}
.rows-small li{
    height: 32px;
    padding: 0;
}
.order-foot{
    display: flex;
    align-items: center;
    gap: 10px;
    height: 47px;
    padding: 0 12px;
    font-weight: 500;
}
.order-foot .red{
    margin-left: 10px;
    color: #fb2c36;
}
.tag{
    display: flex;
    align-items: center;
    height: 36px;
    border-radius: 4px;
    background: #e2e8f0;
    font-size: 20px;
}
.tag b{
    padding: 0 5px;
}
.tag-icon{
    display: flex;
    align-items: center;
    justify-content: center;
    width: 45px;
    height: 36px;
    margin-right: 4px;
    border-right: 1px solid #90a1b9;
    color: #000;
}
.tag-green .tag-icon{
    color: #009839;
}
.mini{
    display: flex;
    align-items: center;
    justify-content: center;
    width: 36px;
    height: 36px;
    border: 1px solid #e2e8f0;
    border-radius: 50%;
    background: #f8fafc;
    box-shadow: 0 1px 2px rgba(0,0,0,.1);
}

/* map */
.map{
    position: relative;
    border-radius: 8px;
    overflow: hidden;
}
.map-svg{
    position: absolute;
    width: 100%;
    height: 100%;
}
.map-tools{
    position: absolute;
    top: 8px;
    left: 6px;
    right: 6px;
    display: flex;
    justify-content: space-between;
}
.views{
    display: flex;
    height: 50px;
    border: 1px solid #e2e8f0;
    border-radius: 6px;
    background: #fff;
    font-size: 22px;
    font-weight: 500;
}
.views button{
    width: 49px;
}
.views button + button{
    width: 50px;
    border-left: 1px solid #e2e8f0;
}
.places text{
    font-size: 17px;
    text-anchor: middle;
}
.places text,.districts text,.parks text,.logo{
    fill: #4b4b4d;
    stroke: #f4f4f4;
    stroke-width: 3px;
    paint-order: stroke;
}
.districts text{
    font-size: 13px;
    font-weight: 500;
    letter-spacing: 1px;
}
.parks text{
    font-size: 19px;
    fill: #12825a;
}
.parks .violet{
    fill: #7a4fc0;
}
.signs text{
    font-size: 14px;
    font-weight: 500;
    text-anchor: middle;
    fill: #6b5212;
}
.signs .w{
    font-weight: 700;
    fill: #fff;
}
.logo{
    font: 500 25px Lato, sans-serif;
    fill: #5b5b5f;
}

/* drivers */
.drivers{
    display: flex;
    flex-direction: column;
    gap: 20px;
}
.driver{
    border: 1px solid #e2e8f0;
    border-radius: 6px;
    background: #fff;
}
.driver-head{
    display: flex;
    justify-content: space-between;
    align-items: center;
    height: 42px;
    padding: 0 11px;
    border-bottom: 1px solid #e2e8f0;
    color: #62748e;
    font-size: 16px;
}
.plate{
    display: flex;
    align-items: center;
    gap: 5px;
    color: #62748e;
}
.plate .plain{
    color: #0f172b;
}
.empty{
    padding: 11px 11px 9px;
}
.course{
    padding: 16px 11px 11px;
}
.course + .course{
    border-top: 1px solid #e2e8f0;
}
.tags{
    display: flex;
    gap: 10px;
    margin-bottom: 6px;
}
.course-frozen .tags{
    margin-bottom: 12px;
}
.frozen{
    flex: 1;
    display: flex;
    align-items: center;
    gap: 11px;
    padding: 0 12px;
    border-radius: 18px;
    background: #ffc9c9;
    color: #e7000b;
    font-size: 20px;
    font-weight: 500;
}
.frozen .icon{
    color: #fb2c36;
}
.driver-buttons{
    display: flex;
    gap: 15px;
    margin-top: auto;
}
.primary{
    flex: 1;
    height: 50px;
    border-radius: 25px;
    background: #155dfc;
    color: #fff;
}

/* fields */
.select{
    position: relative;
}
.select select,.select input{
    appearance: none;
    display: block;
    width: 100%;
    height: 50px;
    padding: 0 50px 0 11px;
    border: 1px solid #e2e8f0;
    border-radius: 6px;
    background: #fff;
    box-shadow: 0 1px 2px rgba(0,0,0,.1);
    color: #62748e;
}
.select input::placeholder{
    color: #62748e;
    opacity: 1;
}
.select .icon{
    position: absolute;
    top: 13px;
    right: 12px;
    color: #000;
    pointer-events: none;
}
.done select{
    padding: 0 60px 0 8px;
    color: #0f172b;
}
.done .icon{
    right: 10px;
    color: #0f172b;
}
.amount{
    margin-top: 4px;
}
.amount input{
    padding-left: 9px;
}
.amount .icon{
    right: 10px;
    color: #62748e;
}

/* filter window */
.overlay{
    position: fixed;
    inset: 0;
    display: flex;
    align-items: center;
    justify-content: center;
    background: rgba(0,0,0,.5);
}
.modal{
    display: flex;
    flex-direction: column;
    gap: 19px;
    width: 600px;
    max-width: 100%;
    padding: 20px;
    border-radius: 8px;
    background: #f8fafc;
    box-shadow: 0 20px 50px rgba(0,0,0,.4);
    color: #314158;
}
.modal-head{
    display: flex;
    align-items: center;
    justify-content: space-between;
    margin-bottom: 20px;
    color: #000;
}
.modal-head h2{
    color: #0f172b;
    font-size: 20px;
    font-weight: 500;
}
.field label{
    display: block;
    margin-bottom: 8px;
}
.bdo{
    display: flex;
    align-items: center;
    gap: 20px;
    margin-top: 11px;
}
.bdo label{
    display: flex;
    align-items: center;
    gap: 10px;
}
.bdo input{
    appearance: none;
    width: 20px;
    height: 20px;
    border: 1px solid #62748e;
    border-radius: 50%;
}
.submit{
    flex: none;
    align-self: flex-end;
    width: 220px;
}
```
